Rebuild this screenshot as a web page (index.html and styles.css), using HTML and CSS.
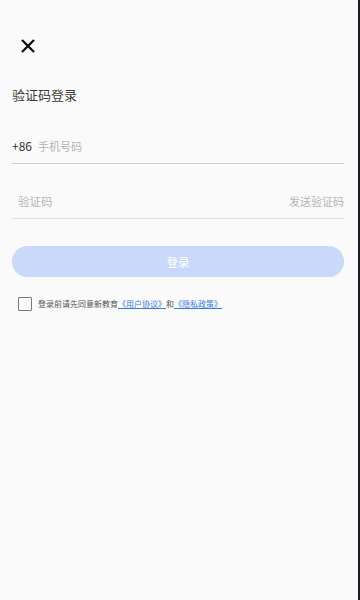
FILE: index.html
```html
<!DOCTYPE html>
<html lang="zh-CN">
<head>
<meta charset="utf-8">
<title>验证码登录</title>
<link rel="stylesheet" href="styles.css">
</head>
<body>
<div class="screen">
  <div class="close">
    <svg width="16" height="16" viewBox="0 0 16 16" aria-hidden="true">
      <path d="M2 2 L14 14 M14 2 L2 14" stroke="#111" stroke-width="2.4" stroke-linecap="butt" fill="none"/>
    </svg>
  </div>
  <div class="title">验证码登录</div>
  <div class="field field-phone">
    <span class="prefix">+86</span>
    <span class="placeholder">手机号码</span>
  </div>
  <div class="field field-code">
    <span class="placeholder">验证码</span>
    <span class="send">发送验证码</span>
  </div>
  <div class="btn">登录</div>
  <div class="agree">
    <span class="checkbox"></span>
    <span class="agree-text">登录前请先同意新教育<a class="link">《用户协议》</a>和<a class="link">《隐私政策》</a></span>
  </div>
</div>
</body>
</html>
```
FILE: styles.css
```css
html, body {
  margin: 0;
  padding: 0;
  background: #fafafa;
}
body {
  font-family: "Noto Sans CJK SC", "Noto Sans", sans-serif;
  color: #333;
}
.screen {
  box-sizing: border-box;
  width: 360px;
  height: 600px;
  padding: 0 14px 0 12px;
  border-right: 2px solid #1d1d28;
  background: #fafafa;
  overflow: hidden;
}
.close {
  padding-top: 38px;
  padding-left: 8px;
  height: 16px;
}
.close svg {
  display: block;
}
.title {
  margin-top: 32px;
  font-size: 13px;
  line-height: 18px;
  color: #3a3a3a;
}
.field {
  display: flex;
  align-items: center;
  line-height: 18px;
  padding-bottom: 8px;
}
.field-phone {
  margin-top: 33px;
  border-bottom: 1px solid #cfcfcf;
}
.prefix {
  color: #333;
  font-size: 12px;
  margin-right: 6px;
}
.placeholder {
  color: #b5b5b5;
  font-size: 11px;
}
.field-code {
  margin-top: 28px;
  border-bottom: 1px solid #e2e2e2;
  padding-left: 6px;
  justify-content: space-between;
}
.field-code .placeholder {
  font-size: 11.5px;
}
.send {
  color: #b5b5b5;
  font-size: 11px;
}
.btn {
  margin-top: 27px;
  height: 31px;
  border-radius: 16px;
  background: #c8d9f9;
  color: #fff;
  font-size: 11.5px;
  display: flex;
  align-items: center;
  justify-content: center;
}
.agree {
  margin-top: 20px;
  display: flex;
  align-items: center;
  padding-left: 6px;
}
.checkbox {
  box-sizing: border-box;
  width: 14px;
  height: 14px;
  border: 1.5px solid #7a7a7a;
  border-radius: 1px;
  margin-right: 6px;
  flex: none;
}
.agree-text {
  font-size: 8px;
  line-height: 12px;
  color: #555;
}
.link {
  color: #3a7be3;
  text-decoration: underline;
}
```
